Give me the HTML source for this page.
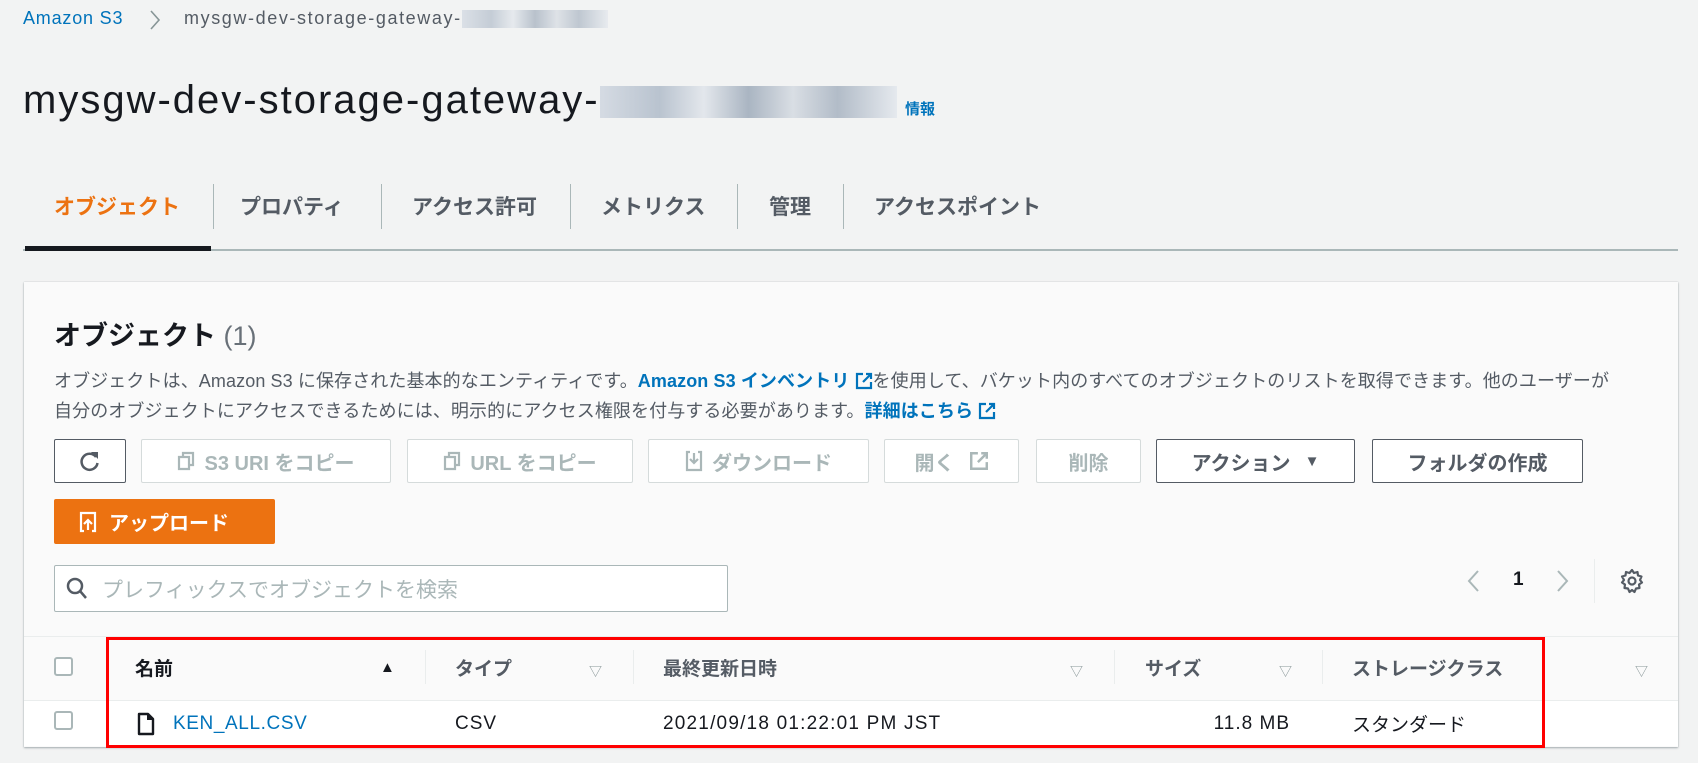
<!DOCTYPE html>
<html><head><meta charset="utf-8"><style>
*{margin:0;padding:0;box-sizing:border-box}
body{width:1698px;height:763px;background:#f2f3f3;font-family:"Liberation Sans","Noto Sans CJK JP",sans-serif;color:#16191f;position:relative;overflow:hidden}
.a{position:absolute;white-space:nowrap}
.blur{display:inline-block;vertical-align:middle;background:linear-gradient(90deg,#d5dbe3,#b9c3cf 20%,#e3e7ec 35%,#aab5c2 50%,#d9dee4 65%,#b2bcc8 80%,#e5e9ee)}
.tab{position:absolute;top:191px;font-size:21px;color:#545b64;font-weight:bold}
.sep{position:absolute;top:184px;width:1px;height:45px;background:#aab7b8}
.btn{position:absolute;top:439px;height:44px;border:1px solid #d5dbdb;border-radius:2px;background:#fff;color:#aab7b8;font-weight:bold;font-size:20px;display:flex;align-items:center;justify-content:center;gap:9px}
.btn.on{border-color:#545b64;color:#545b64}
.th{position:absolute;top:654px;font-size:19px;font-weight:bold;color:#545b64}
.tri{position:absolute;top:661px;font-size:13px;color:#879596}
.cs{position:absolute;top:650px;width:1px;height:34px;background:#eaeded}
.cb{position:absolute;left:54px;width:19px;height:19px;border:2px solid #aab7b8;border-radius:3px;background:#fff}
.td{position:absolute;top:713px;font-size:19px;color:#16191f;letter-spacing:1px}
.ext{display:inline-block;vertical-align:-3px}
</style></head><body>
<div class="a" style="left:23px;top:8px;font-size:18px;color:#0073bb;letter-spacing:.8px">Amazon S3</div>
<svg class="a" style="left:149px;top:9px" width="12" height="22"><path d="M2 2l8 9-8 9" fill="none" stroke="#879596" stroke-width="1.6"/></svg>
<div class="a" style="left:184px;top:8px;font-size:18px;color:#545b64;letter-spacing:1.6px">mysgw-dev-storage-gateway-<span class="blur" style="width:146px;height:18px;opacity:.8"></span></div>
<div class="a" style="left:23px;top:78px;font-size:40px;color:#16191f;letter-spacing:2px">mysgw-dev-storage-gateway-<span class="blur" style="width:297px;height:32px"></span></div>
<div class="a" style="left:905px;top:98px;font-size:15px;color:#0073bb;font-weight:bold">情報</div>

<div class="tab" style="left:54px;color:#ec7211">オブジェクト</div>
<div class="sep" style="left:213px"></div>
<div class="tab" style="left:240px">プロパティ</div>
<div class="sep" style="left:381px"></div>
<div class="tab" style="left:412px">アクセス許可</div>
<div class="sep" style="left:570px"></div>
<div class="tab" style="left:601px">メトリクス</div>
<div class="sep" style="left:737px"></div>
<div class="tab" style="left:769px">管理</div>
<div class="sep" style="left:843px"></div>
<div class="tab" style="left:874px">アクセスポイント</div>
<div class="a" style="left:23px;top:249px;width:1655px;height:2px;background:#aab7b8"></div>
<div class="a" style="left:25px;top:246px;width:186px;height:5px;background:#16191f"></div>

<div class="a" style="left:24px;top:282px;width:1654px;height:465px;background:#fafafa;box-shadow:0 1px 2px rgba(0,28,36,.3),0 0 1px rgba(0,28,36,.2)"></div>
<div class="a" style="left:54px;top:314px;font-size:27px;font-weight:bold">オブジェクト <span style="font-weight:normal;color:#687078">(1)</span></div>
<div class="a" style="left:54px;top:367px;font-size:18px;color:#545b64;letter-spacing:.1px">オブジェクトは、Amazon S3 に保存された基本的なエンティティです。<b style="color:#0073bb">Amazon S3 インベントリ <svg class="ext" width="18" height="18" viewBox="0 0 18 18"><path d="M8 2H2v14h14v-6M11 2h5v5M16 2L8 10" fill="none" stroke="#0073bb" stroke-width="2.2"/></svg></b>を使用して、バケット内のすべてのオブジェクトのリストを取得できます。他のユーザーが</div>
<div class="a" style="left:54px;top:397px;font-size:18px;color:#545b64;letter-spacing:.1px">自分のオブジェクトにアクセスできるためには、明示的にアクセス権限を付与する必要があります。<b style="color:#0073bb">詳細はこちら <svg class="ext" width="18" height="18" viewBox="0 0 18 18"><path d="M8 2H2v14h14v-6M11 2h5v5M16 2L8 10" fill="none" stroke="#0073bb" stroke-width="2.2"/></svg></b></div>

<div class="btn on" style="left:54px;width:72px"><svg width="24" height="24" viewBox="0 0 24 24"><path d="M18 8A8 8 0 1 0 19.5 14" fill="none" stroke="#545b64" stroke-width="2.5"/><path d="M13 3h7v7z" fill="#545b64"/></svg></div>
<div class="btn" style="left:141px;width:250px"><svg width="18" height="20" viewBox="0 0 18 20"><path d="M6 5V2h10v12h-3M2 6h10v12H2z" fill="none" stroke="#aab7b8" stroke-width="2.2"/></svg>S3 URI をコピー</div>
<div class="btn" style="left:407px;width:226px"><svg width="18" height="20" viewBox="0 0 18 20"><path d="M6 5V2h10v12h-3M2 6h10v12H2z" fill="none" stroke="#aab7b8" stroke-width="2.2"/></svg>URL をコピー</div>
<div class="btn" style="left:648px;width:221px"><svg width="18" height="22" viewBox="0 0 18 22"><path d="M5 2H2v18h14V2h-3M9 3v10M5 9l4 4 4-4" fill="none" stroke="#aab7b8" stroke-width="2.2"/></svg>ダウンロード</div>
<div class="btn" style="left:884px;width:135px;gap:14px">開く<svg width="20" height="20" viewBox="0 0 18 18"><path d="M8 2H2v14h14v-6M11 2h5v5M16 2L8 10" fill="none" stroke="#aab7b8" stroke-width="2.2"/></svg></div>
<div class="btn" style="left:1036px;width:105px">削除</div>
<div class="btn on" style="left:1156px;width:199px;gap:14px">アクション <span style="font-size:15px">▼</span></div>
<div class="btn on" style="left:1372px;width:211px">フォルダの作成</div>
<div class="btn" style="left:54px;top:499px;width:221px;height:45px;background:#ec7211;border-color:#ec7211;color:#fff;justify-content:flex-start;padding-left:24px;gap:12px"><svg width="18" height="22" viewBox="0 0 18 22"><path d="M5 20H2V2h14v18h-3M9 19V9M5 13l4-4 4 4" fill="none" stroke="#fff" stroke-width="2.2"/></svg>アップロード</div>

<div class="a" style="left:54px;top:565px;width:674px;height:47px;background:#fff;border:1px solid #aab7b8;border-radius:2px"></div>
<svg class="a" style="left:66px;top:577px" width="22" height="24"><circle cx="9" cy="9" r="7" fill="none" stroke="#545b64" stroke-width="2.5"/><path d="M14 14l6 7" stroke="#545b64" stroke-width="2.5"/></svg>
<div class="a" style="left:102px;top:574px;font-size:21px;color:#aab7b8">プレフィックスでオブジェクトを検索</div>

<svg class="a" style="left:1466px;top:569px" width="14" height="24"><path d="M12 2L3 12l9 10" fill="none" stroke="#aab7b8" stroke-width="2"/></svg>
<div class="a" style="left:1513px;top:569px;font-size:19px;font-weight:bold">1</div>
<svg class="a" style="left:1556px;top:569px" width="14" height="24"><path d="M2 2l9 10-9 10" fill="none" stroke="#aab7b8" stroke-width="2"/></svg>
<div class="a" style="left:1594px;top:559px;width:1px;height:44px;background:#eaeded"></div>
<svg class="a" style="left:1619px;top:568px" width="26" height="26" viewBox="0 0 26 26"><path d="M13 2l2 3 3.5-1 .5 3.5 3.5 1-1.5 3.5 2 2.5-3 2 .5 3.5-3.5.5-1.5 3.5-2.5-2-2.5 2-1.5-3.5-3.5-.5.5-3.5-3-2 2-2.5L3 8.5l3.5-1L7 4l3.5 1z" fill="none" stroke="#545b64" stroke-width="2.2" stroke-linejoin="round"/><circle cx="13" cy="13" r="3.5" fill="none" stroke="#545b64" stroke-width="2.2"/></svg>

<div class="a" style="left:24px;top:636px;width:1654px;height:1px;background:#eaeded"></div>
<div class="a" style="left:24px;top:700px;width:1654px;height:46px;background:#fff;border-top:1px solid #eaeded"></div>
<div class="cb" style="top:657px"></div>
<div class="cb" style="top:711px"></div>
<div class="th" style="left:135px;color:#16191f">名前</div>
<div class="a" style="left:380px;top:659px;font-size:15px;color:#16191f">▲</div>
<div class="cs" style="left:425px"></div>
<div class="th" style="left:455px">タイプ</div>
<div class="tri" style="left:589px">▽</div>
<div class="cs" style="left:633px"></div>
<div class="th" style="left:663px">最終更新日時</div>
<div class="tri" style="left:1070px">▽</div>
<div class="cs" style="left:1114px"></div>
<div class="th" style="left:1145px">サイズ</div>
<div class="tri" style="left:1279px">▽</div>
<div class="cs" style="left:1322px"></div>
<div class="th" style="left:1352px">ストレージクラス</div>
<div class="tri" style="left:1635px">▽</div>

<svg class="a" style="left:137px;top:712px" width="18" height="24" viewBox="0 0 18 24"><path d="M2 2h9l5 5v15H2z" fill="none" stroke="#16191f" stroke-width="2.4" stroke-linejoin="round"/><path d="M10 2v6h6z" fill="#16191f"/></svg>
<div class="td" style="left:173px;color:#0073bb;letter-spacing:.6px">KEN_ALL.CSV</div>
<div class="td" style="left:455px">CSV</div>
<div class="td" style="left:663px;letter-spacing:1.2px">2021/09/18 01:22:01 PM JST</div>
<div class="td" style="left:1150px;width:140px;text-align:right">11.8 MB</div>
<div class="td" style="left:1352px;letter-spacing:0;top:710px">スタンダード</div>

<div class="a" style="left:106px;top:637px;width:1439px;height:111px;border:3px solid #f00"></div>
</body></html>
